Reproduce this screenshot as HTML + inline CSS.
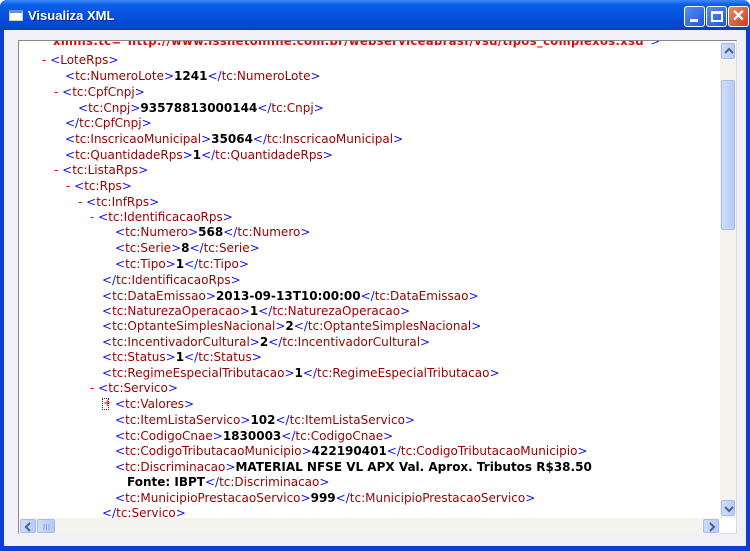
<!DOCTYPE html>
<html><head><meta charset="utf-8"><style>
*{margin:0;padding:0;box-sizing:border-box}
body{width:750px;height:551px;overflow:hidden;background:#fff;font-family:"DejaVu Sans","Liberation Sans",sans-serif}
.win{position:absolute;left:0;top:0;width:750px;height:551px;background:#0a3fd0;border-radius:7px 7px 0 0}
.title{position:absolute;left:0;top:0;width:750px;height:30px;border-radius:7px 7px 0 0;background:linear-gradient(#3d8af7 0%,#0a5fe8 15%,#0553e0 50%,#0447d2 85%,#0a3fc0 100%)}
.title .t{position:absolute;left:28px;top:8px;color:#fff;font:bold 13px "Liberation Sans",sans-serif;text-shadow:1px 1px #0a2a80}
.ico{position:absolute;left:9px;top:10px;width:14px;height:11px;background:#fff;border:1px solid #ccc;border-top:3px solid #6a8fd8}
.btn{position:absolute;top:6px;width:21px;height:21px;border:1px solid #fff;border-radius:3px;background:linear-gradient(135deg,#5a8cf5,#1f55d8)}
.body{position:absolute;left:4px;top:30px;width:742px;height:516px;background:#f1f0f6}
.cont{position:absolute;left:18px;top:40px;width:719px;height:494px;background:#fff;border:1px solid #888;border-right-color:#ddd;border-bottom-color:#ddd;overflow:hidden}
.l{position:absolute;white-space:pre;font-size:12px;line-height:14px;color:#000}
.b{color:#1010ee}.n{color:#990000}.v{font-weight:bold}.m{color:#dd0000}
.vs{position:absolute;left:720px;top:42px;width:16px;height:476px;background:#f4f3ee}
.hs{position:absolute;left:20px;top:518px;width:700px;height:16px;background:#f4f3ee}
.sb{position:absolute;background:linear-gradient(90deg,#cfdcfb,#b6cbf8);border:1px solid #a8bdec;border-radius:2px}
.sb svg{position:absolute;left:0;top:0}
</style></head><body>
<div class="win">
<div class="title"><div class="ico"></div><div class="t">Visualiza XML</div>
<div class="btn" style="left:684px"><div style="position:absolute;left:5px;top:12px;width:8px;height:3px;background:#fff"></div></div>
<div class="btn" style="left:706px"><div style="position:absolute;left:4px;top:4px;width:12px;height:11px;border:2px solid #fff;border-top-width:3px"></div></div>
<div class="btn" style="left:728px;background:linear-gradient(135deg,#e88a6a,#c8401a);color:#fff;font:bold 16px sans-serif;text-align:center;line-height:20px">✕</div>
</div>
<div class="body"></div>
<div class="cont"></div>
<div class="vs">
<div class="sb" style="left:1px;top:1px;width:14px;height:16px"><svg width="14" height="16"><path d="M3 9 L7 5 L11 9" stroke="#4d6185" stroke-width="2" fill="none"/></svg></div>
<div class="sb" style="left:1px;top:38px;width:14px;height:150px"></div>
<div class="sb" style="left:1px;top:458px;width:14px;height:16px"><svg width="14" height="16"><path d="M3 6 L7 10 L11 6" stroke="#4d6185" stroke-width="2" fill="none"/></svg></div></div>
<div class="hs">
<div class="sb" style="left:0;top:1px;width:16px;height:14px"><svg width="16" height="14"><path d="M9 3 L5 7 L9 11" stroke="#4d6185" stroke-width="2" fill="none"/></svg></div>
<div class="sb" style="left:17px;top:1px;width:18px;height:14px"><svg width="18" height="14"><path d="M6 4V10M8.5 4V10M11 4V10" stroke="#8ea4d8" stroke-width="1"/></svg></div>
<div class="sb" style="left:683px;top:1px;width:16px;height:14px"><svg width="16" height="14"><path d="M6 3 L10 7 L6 11" stroke="#4d6185" stroke-width="2" fill="none"/></svg></div></div>
</div>
<div style="position:absolute;left:19px;top:41px;width:700px;height:477px;overflow:hidden">
<div style="position:relative;left:-19px;top:-41px">
<div class="l m" style="left:53px;top:34px;font-weight:bold;font-size:11.5px;letter-spacing:0.4px;color:#ee0000">xmlns:tc="http://www.issnetonline.com.br/webserviceabrasf/vsd/tipos_complexos.xsd"<span class="b" style="font-weight:normal">&gt;</span></div>
<div class="l" style="left:42px;top:53px"><span class="m">- </span><span class="b">&lt;</span><span class="n">LoteRps</span><span class="b">&gt;</span></div>
<div class="l" style="left:65px;top:69px"><span class="b">&lt;</span><span class="n">tc:NumeroLote</span><span class="b">&gt;</span><span class="v">1241</span><span class="b">&lt;/</span><span class="n">tc:NumeroLote</span><span class="b">&gt;</span></div>
<div class="l" style="left:54px;top:85px"><span class="m">- </span><span class="b">&lt;</span><span class="n">tc:CpfCnpj</span><span class="b">&gt;</span></div>
<div class="l" style="left:78px;top:101px"><span class="b">&lt;</span><span class="n">tc:Cnpj</span><span class="b">&gt;</span><span class="v">93578813000144</span><span class="b">&lt;/</span><span class="n">tc:Cnpj</span><span class="b">&gt;</span></div>
<div class="l" style="left:65px;top:116px"><span class="b">&lt;/</span><span class="n">tc:CpfCnpj</span><span class="b">&gt;</span></div>
<div class="l" style="left:65px;top:132px"><span class="b">&lt;</span><span class="n">tc:InscricaoMunicipal</span><span class="b">&gt;</span><span class="v">35064</span><span class="b">&lt;/</span><span class="n">tc:InscricaoMunicipal</span><span class="b">&gt;</span></div>
<div class="l" style="left:65px;top:148px"><span class="b">&lt;</span><span class="n">tc:QuantidadeRps</span><span class="b">&gt;</span><span class="v">1</span><span class="b">&lt;/</span><span class="n">tc:QuantidadeRps</span><span class="b">&gt;</span></div>
<div class="l" style="left:54px;top:163px"><span class="m">- </span><span class="b">&lt;</span><span class="n">tc:ListaRps</span><span class="b">&gt;</span></div>
<div class="l" style="left:66px;top:179px"><span class="m">- </span><span class="b">&lt;</span><span class="n">tc:Rps</span><span class="b">&gt;</span></div>
<div class="l" style="left:78px;top:195px"><span class="m">- </span><span class="b">&lt;</span><span class="n">tc:InfRps</span><span class="b">&gt;</span></div>
<div class="l" style="left:90px;top:210px"><span class="m">- </span><span class="b">&lt;</span><span class="n">tc:IdentificacaoRps</span><span class="b">&gt;</span></div>
<div class="l" style="left:115px;top:225px"><span class="b">&lt;</span><span class="n">tc:Numero</span><span class="b">&gt;</span><span class="v">568</span><span class="b">&lt;/</span><span class="n">tc:Numero</span><span class="b">&gt;</span></div>
<div class="l" style="left:115px;top:241px"><span class="b">&lt;</span><span class="n">tc:Serie</span><span class="b">&gt;</span><span class="v">8</span><span class="b">&lt;/</span><span class="n">tc:Serie</span><span class="b">&gt;</span></div>
<div class="l" style="left:115px;top:257px"><span class="b">&lt;</span><span class="n">tc:Tipo</span><span class="b">&gt;</span><span class="v">1</span><span class="b">&lt;/</span><span class="n">tc:Tipo</span><span class="b">&gt;</span></div>
<div class="l" style="left:102px;top:273px"><span class="b">&lt;/</span><span class="n">tc:IdentificacaoRps</span><span class="b">&gt;</span></div>
<div class="l" style="left:102px;top:289px"><span class="b">&lt;</span><span class="n">tc:DataEmissao</span><span class="b">&gt;</span><span class="v">2013-09-13T10:00:00</span><span class="b">&lt;/</span><span class="n">tc:DataEmissao</span><span class="b">&gt;</span></div>
<div class="l" style="left:102px;top:304px"><span class="b">&lt;</span><span class="n">tc:NaturezaOperacao</span><span class="b">&gt;</span><span class="v">1</span><span class="b">&lt;/</span><span class="n">tc:NaturezaOperacao</span><span class="b">&gt;</span></div>
<div class="l" style="left:102px;top:319px"><span class="b">&lt;</span><span class="n">tc:OptanteSimplesNacional</span><span class="b">&gt;</span><span class="v">2</span><span class="b">&lt;/</span><span class="n">tc:OptanteSimplesNacional</span><span class="b">&gt;</span></div>
<div class="l" style="left:102px;top:335px"><span class="b">&lt;</span><span class="n">tc:IncentivadorCultural</span><span class="b">&gt;</span><span class="v">2</span><span class="b">&lt;/</span><span class="n">tc:IncentivadorCultural</span><span class="b">&gt;</span></div>
<div class="l" style="left:102px;top:350px"><span class="b">&lt;</span><span class="n">tc:Status</span><span class="b">&gt;</span><span class="v">1</span><span class="b">&lt;/</span><span class="n">tc:Status</span><span class="b">&gt;</span></div>
<div class="l" style="left:102px;top:366px"><span class="b">&lt;</span><span class="n">tc:RegimeEspecialTributacao</span><span class="b">&gt;</span><span class="v">1</span><span class="b">&lt;/</span><span class="n">tc:RegimeEspecialTributacao</span><span class="b">&gt;</span></div>
<div class="l" style="left:90px;top:381px"><span class="m">- </span><span class="b">&lt;</span><span class="n">tc:Servico</span><span class="b">&gt;</span></div>
<div style="position:absolute;left:102px;top:398px;width:7px;height:12px;border:1px dotted #333;color:#d00;font-size:10px;line-height:9px;text-align:center">+</div>
<div class="l" style="left:115px;top:397px"><span class="b">&lt;</span><span class="n">tc:Valores</span><span class="b">&gt;</span></div>
<div class="l" style="left:115px;top:413px"><span class="b">&lt;</span><span class="n">tc:ItemListaServico</span><span class="b">&gt;</span><span class="v">102</span><span class="b">&lt;/</span><span class="n">tc:ItemListaServico</span><span class="b">&gt;</span></div>
<div class="l" style="left:115px;top:429px"><span class="b">&lt;</span><span class="n">tc:CodigoCnae</span><span class="b">&gt;</span><span class="v">1830003</span><span class="b">&lt;/</span><span class="n">tc:CodigoCnae</span><span class="b">&gt;</span></div>
<div class="l" style="left:115px;top:444px"><span class="b">&lt;</span><span class="n">tc:CodigoTributacaoMunicipio</span><span class="b">&gt;</span><span class="v">422190401</span><span class="b">&lt;/</span><span class="n">tc:CodigoTributacaoMunicipio</span><span class="b">&gt;</span></div>
<div class="l" style="left:115px;top:460px"><span class="b">&lt;</span><span class="n">tc:Discriminacao</span><span class="b">&gt;</span><span class="v">MATERIAL NFSE VL APX Val. Aprox. Tributos R$38.50</span></div>
<div class="l" style="left:127px;top:475px"><span class="v">Fonte: IBPT</span><span class="b">&lt;/</span><span class="n">tc:Discriminacao</span><span class="b">&gt;</span></div>
<div class="l" style="left:115px;top:491px"><span class="b">&lt;</span><span class="n">tc:MunicipioPrestacaoServico</span><span class="b">&gt;</span><span class="v">999</span><span class="b">&lt;/</span><span class="n">tc:MunicipioPrestacaoServico</span><span class="b">&gt;</span></div>
<div class="l" style="left:102px;top:506px"><span class="b">&lt;/</span><span class="n">tc:Servico</span><span class="b">&gt;</span></div>
</div></div>
</body></html>
